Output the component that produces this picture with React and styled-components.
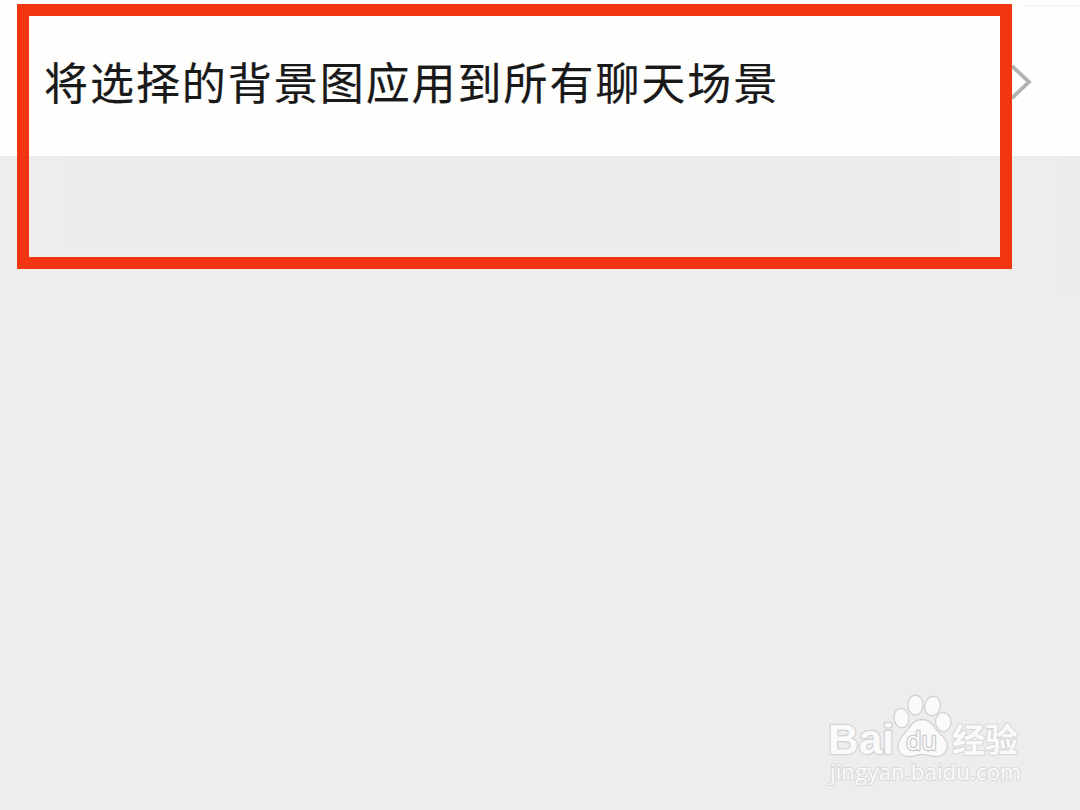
import React from "react";
import styled, { createGlobalStyle } from "styled-components";

const GlobalStyle = createGlobalStyle`
  body { margin: 0; overflow: hidden; background: #ededed; }
`;

const Screen = styled.main`
  position: relative;
  display: flex;
  flex-direction: column;
  width: 1080px;
  height: 810px;
  overflow: hidden;
  background: #ededed;
  font-family: "Noto Sans CJK SC", sans-serif;
`;

const SettingSection = styled.section`
  display: flex;
  flex-direction: column;
  height: 156px;
  background: #fefefd;
`;

const Divider = styled.div`
  align-self: flex-end;
  box-sizing: border-box;
  width: 57px;
  height: 6px;
  border-bottom: 1px solid #f1f1f1;
`;

const SettingRow = styled.div`
  display: flex;
  flex: 1;
  align-items: center;
  justify-content: space-between;
  padding: 4px 47px 0 44px;
`;

const Label = styled.span`
  padding-bottom: 4px;
  font-size: 44px;
  line-height: 64px;
  letter-spacing: 1.95px;
  color: #191919;
  -webkit-text-stroke: 0.2px #191919;
  white-space: nowrap;
`;

const Chevron = styled.svg`
  width: 22px;
  height: 40px;
  margin-bottom: 2px;
`;

const Backdrop = styled.section`
  display: flex;
  flex: 1;
  align-items: flex-start;
  justify-content: space-between;
  padding-left: 64px;
`;

const Shade = styled.div`
  width: ${(p) => p.$width}px;
  height: ${(p) => p.$height}px;
  background: ${(p) => p.$color};
`;

const Highlight = styled.div`
  position: absolute;
  box-sizing: border-box;
  left: 17px;
  top: 4px;
  width: 995px;
  height: 265px;
  border: 12px solid #f23611;
`;

const Watermark = styled.svg`
  position: absolute;
  right: 50px;
  bottom: 15px;
  width: 210px;
  height: 110px;
`;

const BrandText = styled.text`
  font-family: ${(p) => p.$family};
  font-weight: ${(p) => p.$weight};
  font-size: ${(p) => p.$size}px;
  fill: #fafafa;
  stroke: ${(p) => p.$edge || "#d6d6d6"};
  stroke-width: ${(p) => p.$outline}px;
  stroke-linejoin: round;
  paint-order: stroke;
`;

const latin = '"Open Sans", "Noto Sans", sans-serif';
const grotesque = '"Liberation Sans", sans-serif';
const cjk = '"Noto Sans CJK SC", sans-serif';

export default function App() {
  return (
    <Screen>
      <GlobalStyle />
      <SettingSection>
        <Divider />
        <SettingRow>
          <Label>将选择的背景图应用到所有聊天场景</Label>
          <Chevron viewBox="0 0 22 40" fill="none" stroke="#b2b2b2" strokeWidth="3.8">
            <path d="M1 4 L18 20 L1 36" />
          </Chevron>
        </SettingRow>
      </SettingSection>
      <Backdrop>
        <Shade $width={895} $height={92} $color="#ebebea" />
        <Shade $width={18} $height={140} $color="#eaecea" />
      </Backdrop>
      <Highlight />
      <Watermark viewBox="0 0 210 110">
        <BrandText x="8" y="69" textLength="66" lengthAdjust="spacingAndGlyphs" $family={grotesque} $weight={700} $size={43} $outline={2.4} $edge="#d2d2d2">Bai</BrandText>
        <g fill="#fafafa" stroke="#d2d2d2" strokeWidth="1.3">
          <ellipse cx="81.5" cy="33" rx="7.5" ry="9.7" transform="rotate(-8 81.5 33)" />
          <ellipse cx="95.5" cy="20" rx="7.5" ry="10" />
          <ellipse cx="112.5" cy="21" rx="7.8" ry="9.8" transform="rotate(12 112.5 21)" />
          <ellipse cx="123.3" cy="37" rx="7.8" ry="9.5" transform="rotate(-5 123.3 37)" />
          <path d="M102 34.5 C96 34.5 92 38 89 43 C86 48 78 53 78 61 C78 67 82 71.5 90 71.5 C95 71.5 97 69.5 102 69.5 C107 69.5 110 71.5 116 71.5 C123 71.5 128 66 127 59 C126 52 118 48 115 43 C112 38 108 34.5 102 34.5 Z" />
        </g>
        <BrandText x="86" y="65" textLength="31" lengthAdjust="spacingAndGlyphs" $family={latin} $weight={400} $size={26} $outline={2.6} $edge="#cbcbcb">du</BrandText>
        <BrandText x="132" y="67" textLength="66" lengthAdjust="spacingAndGlyphs" $family={cjk} $weight={700} $size={33} $outline={2}>经验</BrandText>
        <BrandText x="10" y="94.5" textLength="191" lengthAdjust="spacingAndGlyphs" $family={latin} $weight={400} $size={22} $outline={2.2} $edge="#dadada">jingyan.baidu.com</BrandText>
      </Watermark>
    </Screen>
  );
}
